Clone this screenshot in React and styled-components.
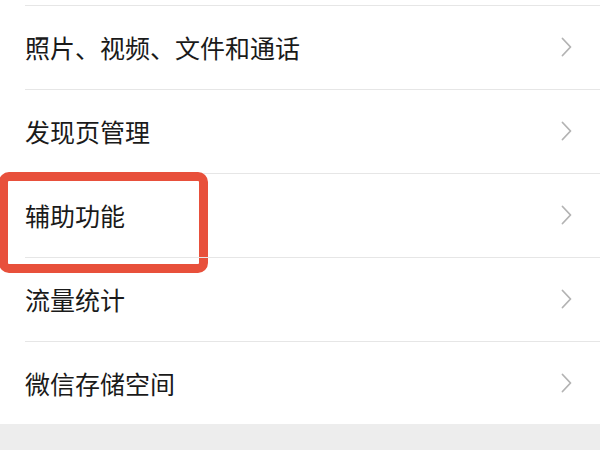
import React from "react";
import styled, { createGlobalStyle } from "styled-components";

const Global = createGlobalStyle`
  html, body { margin: 0; padding: 0; background: #ededed; }
  body { font-family: "Noto Sans CJK SC", "Noto Sans", sans-serif; }
`;

const Page = styled.div`
  width: 600px;
  height: 450px;
  overflow: hidden;
  background: #ededed;
  display: flex;
  flex-direction: column;
`;

const List = styled.div`
  background: #ffffff;
  padding-top: 4px;
  display: flex;
  flex-direction: column;
`;

const Row = styled.div`
  position: relative;
  height: 83px;
  display: flex;
  align-items: center;
  justify-content: space-between;
  padding: 0 28px 0 25px;
  &::before {
    content: "";
    position: absolute;
    left: 25px;
    right: 0;
    top: 0;
    height: 1px;
    background: #e6e6e6;
  }
  border-top: 1px solid transparent;
`;

const Label = styled.span`
  font-size: 25px;
  line-height: 1;
  color: #1a1a1a;
  letter-spacing: 0;
  margin-top: 2px;
`;

const Highlight = styled.div`
  position: absolute;
  left: -1px;
  top: -1px;
  width: 209px;
  height: 101px;
  box-sizing: border-box;
  border: 9px solid #e8503b;
  border-radius: 10px;
  pointer-events: none;
`;

const Chevron = () => (
  <svg width="11" height="20" viewBox="0 0 11 20" fill="none">
    <polyline
      points="1.5,1.5 9.5,10 1.5,18.5"
      stroke="#b3b3b3"
      strokeWidth="1.8"
      strokeLinecap="round"
      strokeLinejoin="round"
    />
  </svg>
);

const items = [
  { label: "照片、视频、文件和通话" },
  { label: "发现页管理" },
  { label: "辅助功能", highlight: true },
  { label: "流量统计" },
  { label: "微信存储空间" },
];

export default function App() {
  return (
    <Page>
      <Global />
      <List>
        {items.map((it) => (
          <Row key={it.label}>
            <Label>{it.label}</Label>
            <Chevron />
            {it.highlight && <Highlight />}
          </Row>
        ))}
      </List>
    </Page>
  );
}
